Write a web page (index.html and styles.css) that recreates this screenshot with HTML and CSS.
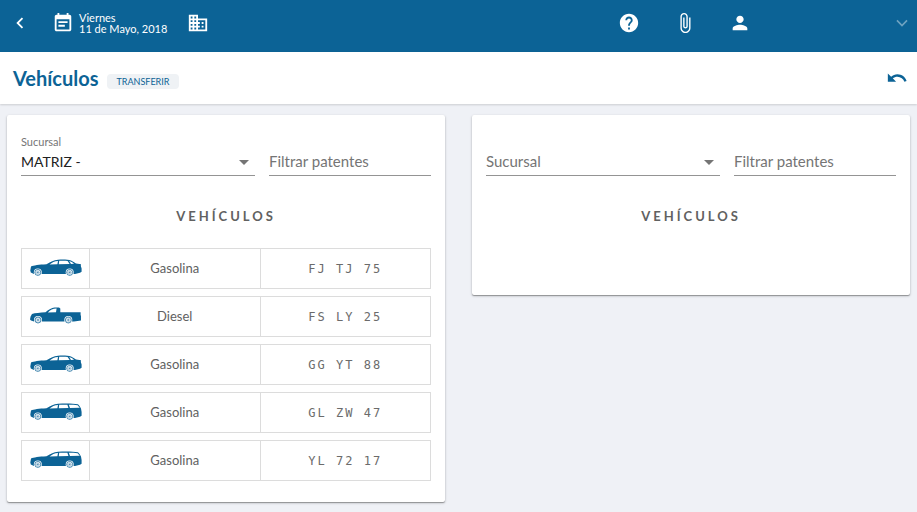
FILE: index.html
```html
<!DOCTYPE html>
<html lang="es">
<head>
<meta charset="utf-8">
<meta name="viewport" content="width=device-width, initial-scale=1">
<title>Vehículos</title>
<link rel="stylesheet" href="styles.css">
</head>
<body>
<svg class="sprite" aria-hidden="true">
  <defs>
    <symbol id="sedan" viewBox="0 0 52 18">
      <path fill-rule="evenodd" d="M1 7.600C3.500 6.400 9 5.700 16.500 5.300C21 2.600 23.500 1.200 28 .8C33 .4 38 .6 41 1.600C43 2.500 44.500 3.500 46 4.500L51 5.200L50.800 7L51.600 9.500V12.800L50 13.800L45 15H4L.8 13.600L.3 11.500ZM19.500 5.400L27.400 5.200L28 1.900C24.500 2.100 22 3.500 19.500 5.400ZM29.200 1.800L28.800 5.200L39.600 5L37.600 1.900C35 1.600 32 1.600 29.200 1.800ZM39.200 2.100L41 4.900L44 4.700C42.500 3.400 41 2.500 39.200 2.100Z"/>
      <use href="#wheel" x="7.800" y="13.400"/>
      <use href="#wheel" x="39.700" y="13.400"/>
    </symbol>
    <symbol id="wagon" viewBox="0 0 52 18">
      <path fill-rule="evenodd" d="M1 7.600C3.500 6.400 9 5.700 16.500 5.300C21 2.600 23.500 1.200 28 .8C35 .3 43 .4 48 1.300L49.500 3L51 5.500L51.600 9V12.800L50 13.800L45 15H4L.8 13.600L.3 11.500ZM19.500 5.400L27.400 5.200L28 1.900C24.500 2.100 22 3.500 19.500 5.400ZM29.200 1.800L28.800 5.200L38.400 5L37.400 1.700ZM38.800 1.700L40 5L49.800 4.800L47.600 2.200C45 1.800 41.500 1.700 38.800 1.700Z"/>
      <use href="#wheel" x="7.800" y="13.400"/>
      <use href="#wheel" x="39.700" y="13.400"/>
    </symbol>
    <symbol id="pickup" viewBox="0 0 52 18">
      <path fill-rule="evenodd" d="M2 7C5 6 10 5.700 15.500 5.300C19 2.500 21.500 1 24.500.6H29L30.300 1.400V5.300H50.600V8L51 9V13.500L44 14.500H4L1 13.500L0 12.500L.6 9.500ZM17.800 5.500L26 5.300L26.600 1.600C23 1.500 20.300 3.200 17.800 5.500Z"/>
      <use href="#wheel" x="8" y="13"/>
      <use href="#wheel" x="38.300" y="13"/>
    </symbol>
    <g id="wheel">
      <circle r="4" fill="#fff"/>
      <g fill="none" stroke="currentColor">
        <circle r="3" stroke-width=".7"/>
        <path d="M0-3V3M-3 0H3M-2.100-2.100L2.100 2.100M2.100-2.100L-2.100 2.100" stroke-width=".4" opacity=".8"/>
      </g>
    </g>
  </defs>
</svg>

<header class="topbar">
  <button class="icon-button" type="button" aria-label="Volver">
    <svg class="icon" viewBox="0 0 24 24"><path d="M15.410 7.410L14 6l-6 6 6 6 1.410-1.410L10.830 12z"/></svg>
  </button>
  <div class="date">
    <svg class="icon" viewBox="0 0 24 24"><path d="M17 10H7v2h10v-2zm2-7h-1V1h-2v2H8V1H6v2H5c-1.110 0-1.990.9-1.990 2L3 19c0 1.100.89 2 2 2h14c1.100 0 2-.9 2-2V5c0-1.100-.9-2-2-2zm0 16H5V8h14v11zm-5-5H7v2h7v-2z"/></svg>
    <time class="date-text" datetime="2018-05-11">Viernes<br>11 de Mayo, 2018</time>
  </div>
  <button class="icon-button" type="button" aria-label="Empresa">
    <svg class="icon" viewBox="0 0 24 24"><path d="M12 7V3H2v18h20V7H12zM6 19H4v-2h2v2zm0-4H4v-2h2v2zm0-4H4V9h2v2zm0-4H4V5h2v2zm4 12H8v-2h2v2zm0-4H8v-2h2v2zm0-4H8V9h2v2zm0-4H8V5h2v2zm10 12h-8v-2h2v-2h-2v-2h2v-2h-2V9h8v10zm-2-8h-2v2h2v-2zm0 4h-2v2h2v-2z"/></svg>
  </button>
  <nav class="tools">
    <button class="icon-button" type="button" aria-label="Ayuda">
      <svg class="icon" viewBox="0 0 24 24"><path d="M12 2C6.480 2 2 6.480 2 12s4.480 10 10 10 10-4.480 10-10S17.520 2 12 2zm1 17h-2v-2h2v2zm2.070-7.750l-.9.920C13.450 12.900 13 13.500 13 15h-2v-.5c0-1.100.45-2.100 1.170-2.830l1.240-1.260c.37-.36.590-.86.590-1.410 0-1.100-.9-2-2-2s-2 .9-2 2H8c0-2.210 1.790-4 4-4s4 1.790 4 4c0 .88-.36 1.680-.93 2.250z"/></svg>
    </button>
    <button class="icon-button" type="button" aria-label="Adjuntos">
      <svg class="icon" viewBox="0 0 24 24"><path d="M16.500 6v11.500c0 2.210-1.790 4-4 4s-4-1.790-4-4V5c0-1.380 1.120-2.500 2.500-2.500s2.500 1.120 2.500 2.500v10.500c0 .55-.45 1-1 1s-1-.45-1-1V6H10v9.500c0 1.380 1.120 2.500 2.500 2.500s2.500-1.120 2.500-2.500V5c0-2.210-1.790-4-4-4S7 2.790 7 5v12.500c0 3.040 2.460 5.500 5.500 5.500s5.500-2.460 5.500-5.500V6h-1.500z"/></svg>
    </button>
    <button class="user-button" type="button" aria-label="Usuario">
      <svg class="icon" viewBox="0 0 24 24"><path d="M12 12c2.210 0 4-1.790 4-4s-1.790-4-4-4-4 1.790-4 4 1.790 4 4 4zm0 2c-2.670 0-8 1.340-8 4v2h16v-2c0-2.660-5.330-4-8-4z"/></svg>
      <svg class="icon icon-faint" viewBox="0 0 24 24"><path d="M6.500 9.200L12 14.800L17.500 9.200" fill="none" stroke="currentColor" stroke-width="1.800"/></svg>
    </button>
  </nav>
</header>

<div class="titlebar">
  <h1 class="title">Vehículos</h1>
  <span class="tag">TRANSFERIR</span>
  <button class="icon-button undo" type="button" aria-label="Deshacer">
    <svg class="icon" viewBox="0 0 24 24"><path d="M12.500 8c-2.650 0-5.050.99-6.900 2.600L2 7v9h9l-3.620-3.620c1.390-1.160 3.160-1.880 5.120-1.880 3.540 0 6.550 2.310 7.600 5.500l2.370-.78C21.080 11.030 17.150 8 12.500 8z"/></svg>
  </button>
</div>

<main class="panels">
  <section class="card">
    <div class="filters">
      <div class="field">
        <label class="field-label field-label-small" for="branch-from">Sucursal</label>
        <select class="control" id="branch-from"><option>MATRIZ -</option></select>
        <svg class="caret" viewBox="0 0 10 5"><path d="M0 0H10L5 5Z"/></svg>
      </div>
      <div class="field">
        <label class="field-label" for="plate-from">Filtrar patentes</label>
        <input class="control" id="plate-from" type="text">
      </div>
    </div>
    <h2 class="heading">VEHÍCULOS</h2>
    <div class="list">
      <table class="vehicles">
        <tbody>
          <tr><td><svg class="car"><use href="#sedan"/></svg></td><td>Gasolina</td><td class="plate">FJ TJ 75</td></tr>
          <tr><td><svg class="car"><use href="#pickup"/></svg></td><td>Diesel</td><td class="plate">FS LY 25</td></tr>
          <tr><td><svg class="car"><use href="#sedan"/></svg></td><td>Gasolina</td><td class="plate">GG YT 88</td></tr>
          <tr><td><svg class="car"><use href="#wagon"/></svg></td><td>Gasolina</td><td class="plate">GL ZW 47</td></tr>
          <tr><td><svg class="car"><use href="#wagon"/></svg></td><td>Gasolina</td><td class="plate">YL 72 17</td></tr>
        </tbody>
      </table>
    </div>
  </section>

  <section class="card">
    <div class="filters">
      <div class="field">
        <label class="field-label" for="branch-to">Sucursal</label>
        <select class="control" id="branch-to"><option value=""></option></select>
        <svg class="caret" viewBox="0 0 10 5"><path d="M0 0H10L5 5Z"/></svg>
      </div>
      <div class="field">
        <label class="field-label" for="plate-to">Filtrar patentes</label>
        <input class="control" id="plate-to" type="text">
      </div>
    </div>
    <h2 class="heading">VEHÍCULOS</h2>
    <div class="list"></div>
  </section>
</main>
</body>
</html>
```

FILE: styles.css
```css
:root {
  --blue: #0c6396;
  --page: #eff1f6;
  --text: #212121;
  --muted: #757575;
  --line: #dcdcdc;
}

* {
  box-sizing: border-box;
}

body {
  margin: 0;
  background: var(--page);
  color: var(--text);
  font-family: Lato, "Liberation Sans", sans-serif;
  font-size: 14px;
}

.sprite {
  position: absolute;
  width: 0;
  height: 0;
}

.icon {
  display: block;
  flex: none;
  width: 22px;
  height: 22px;
  fill: currentColor;
}

.icon-faint {
  opacity: 0.4;
}

.icon-button,
.user-button {
  display: flex;
  align-items: center;
  justify-content: center;
  width: 24px;
  height: 24px;
  padding: 0;
  border: 0;
  background: none;
  color: inherit;
  cursor: pointer;
}

.topbar {
  display: flex;
  align-items: center;
  height: 52px;
  padding: 0 4px 6px 8px;
  background: var(--blue);
  color: #fff;
}

.date {
  display: flex;
  align-items: center;
  gap: 5px;
  margin: 0 19px 0 20px;
}

.date-text {
  font-size: 11px;
  line-height: 11px;
}

.tools {
  display: flex;
  gap: 32px;
  margin-left: auto;
}

.user-button {
  justify-content: space-between;
  width: 184px;
}

.titlebar {
  display: flex;
  align-items: center;
  height: 52px;
  padding: 0 8px 0 13px;
  background: #fff;
  box-shadow: 0 1px 2px rgba(0, 0, 0, 0.15);
  color: var(--blue);
}

.title {
  margin: 0;
  font-size: 20px;
  line-height: 24px;
}

.tag {
  margin: 6px 0 0 8px;
  padding: 0 10px;
  border-radius: 4px;
  background: #eff2f5;
  font-size: 9px;
  line-height: 15px;
}

.undo {
  margin-left: auto;
}

.panels {
  display: grid;
  grid-template-columns: 1fr 1fr;
  align-items: start;
  gap: 27px;
  padding: 11px 7px 10px;
}

.card {
  padding: 14px;
  border-radius: 2px;
  background: #fff;
  box-shadow: 0 1px 3px rgba(0, 0, 0, 0.2), 0 1px 1px rgba(0, 0, 0, 0.3);
}

.filters {
  display: grid;
  grid-template-columns: 13fr 9fr;
  gap: 14px;
}

.field {
  position: relative;
  padding-top: 20px;
}

.field-label {
  position: absolute;
  top: 20px;
  left: 0;
  color: var(--muted);
  font-size: 15px;
  line-height: 24px;
  pointer-events: none;
}

.field-label-small {
  top: 6px;
  font-size: 11px;
  line-height: 14px;
}

.control {
  display: block;
  width: 100%;
  height: 27px;
  padding: 0;
  border: 0;
  border-bottom: 1px solid #949494;
  border-radius: 0;
  outline: 0;
  appearance: none;
  background: transparent;
  color: var(--text);
  font: 14px/24px Lato, "Liberation Sans", sans-serif;
}

.caret {
  position: absolute;
  top: 31px;
  right: 6px;
  width: 10px;
  height: 5px;
  fill: var(--muted);
  pointer-events: none;
}

.heading {
  margin: 30px 0 15px;
  color: #616161;
  font-size: 13px;
  letter-spacing: 3px;
  line-height: 20px;
  text-align: center;
}

.list {
  min-height: 40px;
}

.vehicles {
  width: 100%;
  border-collapse: separate;
  border-spacing: 0 7px;
  table-layout: fixed;
}

.vehicles td {
  height: 41px;
  padding: 0 0 2px;
  border: 1px solid var(--line);
  border-left-width: 0;
  color: #616161;
  font-size: 13px;
  text-align: center;
}

.vehicles td:first-child {
  width: 69px;
  border-left-width: 1px;
}

.vehicles .plate {
  padding: 0;
  color: #6b6b6b;
  font-family: "DejaVu Sans Mono", monospace;
  font-size: 12px;
  letter-spacing: 2px;
}

.car {
  display: block;
  width: 52px;
  height: 18px;
  margin: 0 auto;
  color: var(--blue);
  fill: currentColor;
}
```
